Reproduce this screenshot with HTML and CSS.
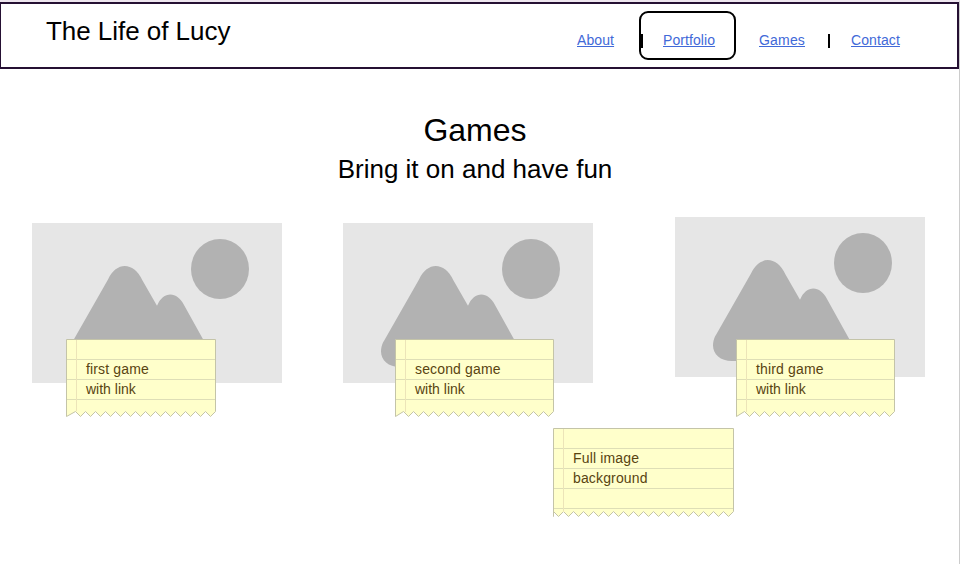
FILE: index.html
```html
<!DOCTYPE html>
<html lang="en">
<head>
<meta charset="utf-8">
<title>The Life of Lucy</title>
<link rel="stylesheet" href="styles.css">
</head>
<body>
<svg class="defs" aria-hidden="true">
  <symbol id="photo" viewBox="0 0 250 160">
    <rect width="250" height="160" fill="#e6e6e6"/>
    <ellipse cx="188" cy="46" rx="29" ry="30" fill="#b2b2b2"/>
    <path fill="#b2b2b2" d="M41.500 117L76 56.500C84.500 38.500 101.500 38.500 110.500 57.500L125 82.700C131 68 145 67.500 152 82L177 127C183 138 175 144 164 144H57C42 144 34 133 40 119.500Z"/>
  </symbol>
</svg>
<div class="page">
  <header class="header">
    <div class="brand">The Life of Lucy</div>
    <nav class="nav">
      <a class="about" href="#">About</a>
      <span class="bar"></span>
      <a class="current" href="#">Portfolio</a>
      <a class="games" href="#">Games</a>
      <span class="bar"></span>
      <a class="contact" href="#">Contact</a>
    </nav>
  </header>
  <main>
    <h1>Games</h1>
    <h2>Bring it on and have fun</h2>
    <div class="cards">
      <section class="card">
        <svg class="photo" width="250" height="160"><use href="#photo"/></svg>
        <div class="note first">
          <svg class="paper" width="150" height="79">
            <path class="sheet" d="M.5 77.500V.5H149.500V72.500
              l-5 5-5-5-5 5-5-5-5 5-5-5-5 5-5-5-5 5-5-5
              l-5 5-5-5-5 5-5-5-5 5-5-5-5 5-5-5-5 5-5-5
              l-5 5-5-5-5 5-5-5-5 5-5-5-5 5-5-5Z"/>
            <path class="rule" d="M1 20.500H149M1 40.500H149M1 60.500H149"/><path class="margin" d="M10.500 1V72"/>
          </svg>
          <p>first game<br><span class="tight">with link</span></p>
        </div>
      </section>
      <section class="card">
        <svg class="photo" width="250" height="160"><use href="#photo"/></svg>
        <div class="note second">
          <svg class="paper" width="159" height="79">
            <path class="sheet" d="M.5 77.500V.5H158.500V72.500
              l-5 5-5-5-5 5-5-5-5 5-5-5-5 5-5-5-5 5-5-5
              l-5 5-5-5-5 5-5-5-5 5-5-5-5 5-5-5-5 5-5-5
              l-5 5-5-5-5 5-5-5-5 5-5-5-5 5-5-5-5 5-5-5Z"/>
            <path class="rule" d="M1 20.500H158M1 40.500H158M1 60.500H158"/><path class="margin" d="M10.500 1V73"/>
          </svg>
          <p>second game<br><span class="tight">with link</span></p>
        </div>
      </section>
      <section class="card raised">
        <svg class="photo" width="250" height="160"><use href="#photo"/></svg>
        <div class="note third">
          <svg class="paper" width="159" height="79">
            <path class="sheet" d="M.5 77.500V.5H158.500V72.500
              l-5 5-5-5-5 5-5-5-5 5-5-5-5 5-5-5-5 5-5-5
              l-5 5-5-5-5 5-5-5-5 5-5-5-5 5-5-5-5 5-5-5
              l-5 5-5-5-5 5-5-5-5 5-5-5-5 5-5-5-5 5-5-5Z"/>
            <path class="rule" d="M1 20.500H158M1 40.500H158M1 60.500H158"/><path class="margin" d="M10.500 1V73"/>
          </svg>
          <p>third game<br><span class="tight">with link</span></p>
        </div>
      </section>
    </div>
    <div class="note full">
      <svg class="paper" width="181" height="90">
        <path class="sheet" d="M.5 88.500V.5H180.500V83.500
          l-5 5-5-5-5 5-5-5-5 5-5-5-5 5-5-5-5 5-5-5
          l-5 5-5-5-5 5-5-5-5 5-5-5-5 5-5-5-5 5-5-5
          l-5 5-5-5-5 5-5-5-5 5-5-5-5 5-5-5-5 5-5-5
          l-5 5-5-5-5 5-5-5-5 5-5-5Z"/>
        <path class="rule" d="M1 20.500H180M1 40.500H180M1 60.500H180M1 80.500H180"/><path class="margin" d="M10.500 1V84"/>
      </svg>
      <p>Full image<br>background</p>
    </div>
  </main>
</div>
</body>
</html>
```
FILE: styles.css
```css
*, *::after { box-sizing: border-box; }
body {
  margin: 0;
  overflow: hidden;
  background: #fff;
  color: #000;
  font-family: "Liberation Sans", Arial, sans-serif;
}
.defs { display: none; }
.page {
  height: 564px;
  border-top: 2px solid #eee6ef;
  border-right: 1px solid #ccc;
}
.header {
  display: flex;
  justify-content: space-between;
  height: 67px;
  margin-left: -1px;
  padding: 0 57px 0 45px;
  border: 2px solid #251033;
}
.brand {
  padding-top: 12px;
  font-size: 26px;
  line-height: 30px;
  letter-spacing: -0.04px;
  white-space: nowrap;
}
.nav {
  display: flex;
  align-items: center;
  height: 20px;
  margin-top: 26px;
  font-size: 14px;
  line-height: 20px;
}
.nav a { color: #4169d8; flex: none; }
.about { width: 38px; letter-spacing: 0.1px; }
.bar { width: 2px; height: 14px; margin-left: 26px; background: #000; position: relative; top: 1px; }
.nav .current { position: relative; width: 52px; margin-left: 20px; letter-spacing: 0.08px; }
.current::after {
  content: "";
  position: absolute;
  left: -24px;
  top: -19px;
  width: 97px;
  height: 49px;
  border: 2px solid #000;
  border-radius: 9px;
}
.games { width: 46px; margin-left: 44px; letter-spacing: 0.18px; }
.games + .bar { margin-left: 23px; }
.contact { width: 49px; margin-left: 21px; letter-spacing: 0.1px; }
h1, h2 { margin: 0; width: 950px; text-align: center; font-weight: 400; }
h1 { padding-top: 41px; font-size: 32px; line-height: 40px; }
h2 { padding-top: 4px; font-size: 26px; line-height: 30px; }
.cards {
  display: grid;
  grid-template-columns: 311px 332px 250px;
  height: 200px;
  margin-top: 33px;
  padding-left: 32px;
}
.card { width: 250px; padding-top: 6px; }
.raised { padding-top: 0; }
.photo { display: block; }
.note { position: relative; height: 79px; padding: 20px 0 0 20px; }
.note p {
  position: relative;
  margin: 0;
  color: #594411;
  font-size: 14px;
  line-height: 20px;
  letter-spacing: 0.15px;
}
.note .tight { letter-spacing: 0; }
.first { width: 150px; margin: -44px 0 0 34px; }
.second { width: 159px; margin: -44px 0 0 52px; }
.third { width: 159px; margin: -38px 0 0 61px; }
.full { width: 181px; height: 90px; margin: 11px 0 0 553px; }
.paper { position: absolute; left: 0; top: 0; }
.sheet { fill: #ffffcb; stroke: #c4c4a8; }
.rule { fill: none; stroke: #dedeb6; }
.margin { fill: none; stroke: #ece4b8; }
```
